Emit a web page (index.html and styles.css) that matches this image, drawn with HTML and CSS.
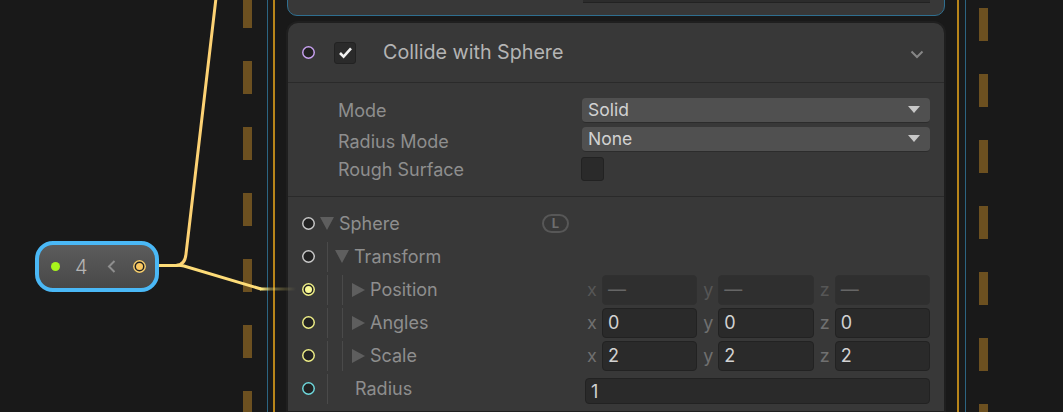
FILE: index.html
```html
<!DOCTYPE html>
<html lang="en">
<head>
    <meta charset="UTF-8">
    <title>Collide with Sphere</title>
    <link rel="stylesheet" href="styles.css">
</head>
<body>
    <div class="graph">
        <div class="stripe stripe-dash dash-left"></div>
        <div class="stripe stripe-dash dash-right"></div>
        <div class="stripe line-blue blue-left"></div>
        <div class="stripe line-orange orange-left"></div>
        <div class="stripe line-orange orange-right"></div>
        <div class="stripe line-blue blue-right"></div>

        <div class="context">
            <div class="block block-selected">
                <div class="block-tail"></div>
            </div>

            <div class="block">
                <div class="block-header">
                    <span class="port port-purple"></span>
                    <span class="check">
                        <svg width="15" height="13" viewBox="0 0 15 13"><path d="M2 7 L5.6 10.6 L13 2.4" fill="none" stroke="#f0f0f0" stroke-width="2.6"/></svg>
                    </span>
                    <span class="block-title">Collide with Sphere</span>
                    <svg class="collapse" width="14" height="9" viewBox="0 0 14 9"><path d="M1.5 1.5 L7 7 L12.5 1.5" fill="none" stroke="#868686" stroke-width="2"/></svg>
                </div>

                <div class="settings">
                    <div class="setting">
                        <span class="label">Mode</span>
                        <div class="select"><span>Solid</span><i class="select-arrow"></i></div>
                    </div>
                    <div class="setting">
                        <span class="label label-low">Radius Mode</span>
                        <div class="select"><span>None</span><i class="select-arrow"></i></div>
                    </div>
                    <div class="setting">
                        <span class="label">Rough Surface</span>
                        <span class="check check-empty"></span>
                    </div>
                </div>

                <div class="props">
                    <div class="prop">
                        <span class="port port-white"></span>
                        <div class="prop-name">
                            <i class="arrow-down arrow-sphere"></i>
                            <span class="label label-sphere">Sphere</span>
                            <span class="space-badge">L</span>
                        </div>
                    </div>
                    <div class="prop">
                        <span class="port port-white"></span>
                        <div class="prop-name">
                            <i class="guide"></i>
                            <i class="arrow-down arrow-transform"></i>
                            <span class="label label-sphere">Transform</span>
                        </div>
                    </div>
                    <div class="prop">
                        <span class="port port-yellow port-linked"></span>
                        <div class="prop-name">
                            <i class="guide"></i><i class="guide guide-2"></i>
                            <i class="arrow-right"></i>
                            <span class="label label-sphere">Position</span>
                        </div>
                        <div class="vector vector-off">
                            <div class="axis"><span>x</span><div class="field">—</div></div>
                            <div class="axis"><span>y</span><div class="field">—</div></div>
                            <div class="axis"><span>z</span><div class="field">—</div></div>
                        </div>
                    </div>
                    <div class="prop">
                        <span class="port port-yellow"></span>
                        <div class="prop-name">
                            <i class="guide"></i><i class="guide guide-2"></i>
                            <i class="arrow-right"></i>
                            <span class="label label-sphere">Angles</span>
                        </div>
                        <div class="vector">
                            <div class="axis"><span>x</span><div class="field">0</div></div>
                            <div class="axis"><span>y</span><div class="field">0</div></div>
                            <div class="axis"><span>z</span><div class="field">0</div></div>
                        </div>
                    </div>
                    <div class="prop">
                        <span class="port port-yellow"></span>
                        <div class="prop-name">
                            <i class="guide"></i><i class="guide guide-2"></i>
                            <i class="arrow-right"></i>
                            <span class="label label-sphere">Scale</span>
                        </div>
                        <div class="vector">
                            <div class="axis"><span>x</span><div class="field">2</div></div>
                            <div class="axis"><span>y</span><div class="field">2</div></div>
                            <div class="axis"><span>z</span><div class="field">2</div></div>
                        </div>
                    </div>
                    <div class="prop">
                        <span class="port port-cyan"></span>
                        <div class="prop-name">
                            <i class="guide"></i>
                            <span class="label label-radius">Radius</span>
                        </div>
                        <div class="field field-wide">1</div>
                    </div>
                </div>
            </div>
        </div>

        <svg class="wires" width="1063" height="412" viewBox="0 0 1063 412">
            <defs>
                <linearGradient id="fade" gradientUnits="userSpaceOnUse" x1="262" y1="0" x2="296" y2="0">
                    <stop offset="0" stop-color="#fbe87c"/>
                    <stop offset="0.25" stop-color="#fbe87c" stop-opacity="0.4"/>
                    <stop offset="1" stop-color="#fbe87c" stop-opacity="0"/>
                </linearGradient>
            </defs>
            <path d="M158 265.5 H176 Q185 265 186 254 L216 -2" fill="none" stroke="#fdd274" stroke-width="3"/>
            <path d="M158 265.5 H176 Q179 265 184 266 L261 289" fill="none" stroke="#fddc78" stroke-width="3"/>
            <path d="M260 289 H296" fill="none" stroke="url(#fade)" stroke-width="3"/>
        </svg>

        <div class="operator">
            <span class="op-dot"></span>
            <span class="op-value">4</span>
            <svg class="op-chevron" width="9" height="13" viewBox="0 0 9 13"><path d="M7.5 1 L2 6.5 L7.5 12" fill="none" stroke="#8e8e8e" stroke-width="2"/></svg>
            <span class="op-port"></span>
        </div>
    </div>
</body>
</html>
```

FILE: styles.css
```css
body {
    margin: 0;
    background-color: #191919;
    font-family: Inter, "Liberation Sans", sans-serif;
}
.graph {
    position: relative;
    width: 1063px;
    height: 412px;
    overflow: hidden;
    background-color: #191919;
}
.wires {
    position: absolute;
    left: 0;
    top: 0;
}

/* context borders behind the blocks */
.stripe {
    position: absolute;
    top: 0;
    height: 412px;
}
.stripe-dash {
    width: 9px;
    background: repeating-linear-gradient(to bottom, #6c5020 0, #6c5020 33px, transparent 33px, transparent 66px);
}
.dash-left {
    left: 243px;
    top: -5px;
    height: 417px;
}
.dash-right {
    left: 979px;
    top: 8px;
    height: 404px;
}
.line-blue {
    width: 1px;
    background-color: #2c6481;
}
.line-orange {
    width: 2px;
    background-color: #b8851a;
}
.blue-left { left: 267px; }
.orange-left { left: 273px; }
.orange-right { left: 957px; }
.blue-right { left: 965px; }

.context {
    position: absolute;
    left: 288px;
    top: -40px;
    width: 656px;
    display: flex;
    flex-direction: column;
    gap: 7px;
}

.block {
    background-color: #383838;
    border-radius: 10px 10px 0 0;
    box-shadow: 0 0 0 2px #1f1f1f;
}
.block-selected {
    height: 54px;
    margin: 0 -1px;
    border: 1px solid #2f6f90;
    border-radius: 10px;
    padding: 0 14px 0 295px;
    box-shadow: none;
}
.block-tail {
    height: 41px;
    border-bottom: 1px solid #222;
    background-color: #2c2c2c;
}

.block-header {
    display: flex;
    align-items: center;
    height: 59px;
    padding-left: 14px;
    border-bottom: 1px solid #2a2a2a;
}
.block-title {
    margin-left: 27px;
    margin-bottom: 2px;
    font-size: 19.7px;
    color: #b4b4b4;
}
.collapse {
    margin-left: auto;
    margin-right: 20px;
    margin-top: 4px;
}

.port {
    flex: none;
    position: relative;
    width: 13px;
    height: 13px;
    border-radius: 50%;
    background-color: #222;
    box-shadow: inset 0 0 0 1.5px currentColor;
}
.port-purple { color: #c8a2f0; margin-right: 19px; }
.port-white { color: #c8c8c8; }
.port-yellow { color: #eeee88; }
.port-cyan { color: #70d8dc; }
.port-linked::after {
    content: "";
    position: absolute;
    left: 3px;
    top: 3px;
    width: 7px;
    height: 7px;
    border-radius: 50%;
    background-color: #fbfb96;
}

.check {
    flex: none;
    display: flex;
    align-items: center;
    justify-content: center;
    box-sizing: border-box;
    width: 22px;
    height: 22px;
    border: 1px solid #222;
    border-radius: 3px;
    background-color: #2a2a2a;
}
.check-empty {
    width: 23px;
    height: 24px;
    margin-left: -1px;
}

.settings {
    display: flex;
    flex-direction: column;
    gap: 5px;
    padding: 15px 14px 15px 50px;
    border-bottom: 1px solid #2a2a2a;
}
.setting {
    display: grid;
    grid-template-columns: 244px 1fr;
    align-items: center;
    height: 24px;
}
.setting:last-child {
    margin-top: 1px;
}
.label {
    font-size: 18px;
    color: #8e8e8e;
}
.label-low {
    margin-top: 4px;
}
.select {
    display: flex;
    align-items: center;
    justify-content: space-between;
    box-sizing: border-box;
    height: 25px;
    padding: 0 10px 1px 6px;
    border-bottom: 1px solid #2c2c2c;
    border-radius: 4px;
    background-color: #505050;
    font-size: 17.5px;
    color: #d2d2d2;
}
.select-arrow {
    width: 0;
    height: 0;
    border-left: 6px solid transparent;
    border-right: 6px solid transparent;
    border-top: 7px solid #c8c8c8;
}

.props {
    padding: 10px 14px 6px;
}
.prop {
    display: flex;
    align-items: center;
    height: 33px;
}
.prop-name {
    flex: none;
    display: flex;
    align-items: center;
    width: 267px;
    height: 33px;
}
.guide {
    flex: none;
    width: 1px;
    height: 30px;
    margin-left: 12px;
    background-color: #4a4a4a;
}
.guide-2 {
    margin-left: 14px;
}
.arrow-down {
    flex: none;
    width: 0;
    height: 0;
    border-left: 7px solid transparent;
    border-right: 7px solid transparent;
    border-top: 13px solid #5e5e5e;
}
.arrow-sphere { margin-left: 5px; }
.arrow-transform { margin-left: 7px; }
.arrow-right {
    flex: none;
    width: 0;
    height: 0;
    margin-left: 9px;
    border-top: 7px solid transparent;
    border-bottom: 7px solid transparent;
    border-left: 13px solid #5e5e5e;
}
.label-sphere { margin-left: 5px; }
.label-radius { margin-left: 27px; }
.space-badge {
    box-sizing: border-box;
    width: 27px;
    height: 19px;
    margin-left: auto;
    margin-right: 13px;
    border: 2px solid #575757;
    border-radius: 10px;
    font-size: 13px;
    font-weight: 700;
    line-height: 15px;
    text-align: center;
    color: #6e6e6e;
}

.vector {
    flex: 1;
    display: flex;
    gap: 6px;
    padding-left: 5px;
}
.axis {
    flex: 1;
    display: flex;
    align-items: center;
    font-size: 18px;
    color: #707070;
}
.axis span {
    flex: none;
    width: 15px;
}
.field {
    flex: 1;
    box-sizing: border-box;
    height: 30px;
    padding-left: 5px;
    border: 1px solid #222;
    border-radius: 4px;
    background-color: #2a2a2a;
    font-size: 18px;
    line-height: 28px;
    color: #d2d2d2;
}
.vector-off .axis {
    color: #565656;
}
.vector-off .field {
    border-color: #303030;
    background-color: #2f2f2f;
    color: #666;
}
.field-wide {
    flex: 1;
    height: 26px;
    margin: 5px 0 0 3px;
    line-height: 25px;
}

/* inline operator node */
.operator {
    position: absolute;
    left: 35px;
    top: 241px;
    box-sizing: border-box;
    width: 124px;
    height: 51px;
    display: flex;
    align-items: center;
    padding-left: 12px;
    border: 4px solid #4ab8f6;
    border-radius: 18px;
    background: linear-gradient(to bottom, #5c5c5c, #484848);
}
.op-dot {
    flex: none;
    width: 9px;
    height: 9px;
    border-radius: 50%;
    background-color: #a8f51c;
}
.op-value {
    margin-left: 15px;
    font-size: 20px;
    font-weight: 300;
    color: #b4b4b4;
}
.op-chevron {
    margin-left: 19px;
}
.op-port {
    position: relative;
    flex: none;
    width: 13px;
    height: 13px;
    margin-left: 17px;
    border-radius: 50%;
    background-color: #222;
    box-shadow: inset 0 0 0 1.5px #f8d070;
}
.op-port::after {
    content: "";
    position: absolute;
    left: 3px;
    top: 3px;
    width: 7px;
    height: 7px;
    border-radius: 50%;
    background-color: #fac860;
}
```
